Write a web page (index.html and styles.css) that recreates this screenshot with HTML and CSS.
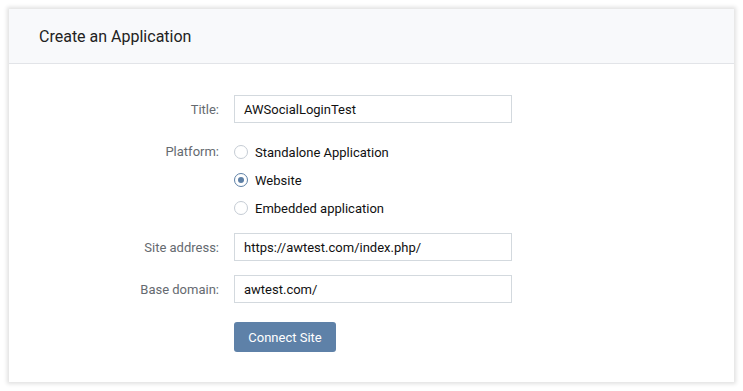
FILE: index.html
```html
<!DOCTYPE html>
<html>
<head>
<meta charset="utf-8">
<link rel="stylesheet" href="styles.css">
</head>
<body>
<div class="card">
  <div class="card-header">Create an Application</div>
  <form class="form">
    <div class="row">
      <label class="label">Title:</label>
      <div class="field"><div class="input">AWSocialLoginTest</div></div>
    </div>
    <div class="row row-platform">
      <label class="label label-top">Platform:</label>
      <div class="field radios">
        <div class="radio"><span class="dot"></span><span>Standalone Application</span></div>
        <div class="radio"><span class="dot checked"></span><span>Website</span></div>
        <div class="radio"><span class="dot"></span><span>Embedded application</span></div>
      </div>
    </div>
    <div class="row row-site">
      <label class="label">Site address:</label>
      <div class="field"><div class="input">https://awtest.com/index.php/</div></div>
    </div>
    <div class="row row-base">
      <label class="label">Base domain:</label>
      <div class="field"><div class="input">awtest.com/</div></div>
    </div>
    <div class="row row-btn">
      <span class="label"></span>
      <div class="field"><button type="button" class="btn">Connect Site</button></div>
    </div>
  </form>
</div>
</body>
</html>
```
FILE: styles.css
```css
html, body {
  margin: 0;
  padding: 0;
  background: #ffffff;
}
body {
  padding: 9px;
  font-family: Roboto, "Liberation Sans", Arial, sans-serif;
  font-size: 13px;
  color: #000;
}
.card {
  width: 725px;
  height: 373px;
  box-sizing: border-box;
  background: #fff;
  box-shadow: 0 0 4px 2px rgba(0, 0, 0, 0.12);
}
.card-header {
  height: 55px;
  box-sizing: border-box;
  background: #f8f9fb;
  border-bottom: 1px solid #e2e4e8;
  padding-left: 30px;
  padding-top: 1px;
  display: flex;
  align-items: center;
  font-size: 16px;
  color: #222;
}
.form {
  padding-top: 31px;
  margin: 0;
}
.row {
  display: flex;
  align-items: center;
}
.label {
  width: 210px;
  text-align: right;
  color: #656a70;
  margin-right: 15px;
  flex: none;
}
.label-top {
  align-self: flex-start;
  line-height: 28px;
}
.input {
  width: 278px;
  height: 28px;
  box-sizing: border-box;
  border: 1px solid #d3d9de;
  padding: 0 9px;
  display: flex;
  align-items: center;
  color: #111;
}
.row-platform {
  margin-top: 15px;
  align-items: flex-start;
}
.radios {
  display: flex;
  flex-direction: column;
}
.radio {
  height: 28px;
  display: flex;
  align-items: center;
  gap: 7px;
  color: #111;
}
.dot {
  width: 12px;
  height: 12px;
  border: 1px solid #c5ccd4;
  border-radius: 50%;
  box-sizing: content-box;
  display: flex;
  align-items: center;
  justify-content: center;
}
.dot.checked {
  border-color: #5d7fa5;
}
.dot.checked::after {
  content: "";
  width: 6px;
  height: 6px;
  border-radius: 50%;
  background: #5d7fa5;
}
.row-site {
  margin-top: 11px;
}
.row-base {
  margin-top: 14px;
}
.row-btn {
  margin-top: 19px;
}
.btn {
  width: 102px;
  height: 30px;
  border: none;
  border-radius: 3px;
  background: #5e81a8;
  color: #fff;
  font-family: Roboto, "Liberation Sans", Arial, sans-serif;
  font-size: 13px;
  padding: 0;
}
```
